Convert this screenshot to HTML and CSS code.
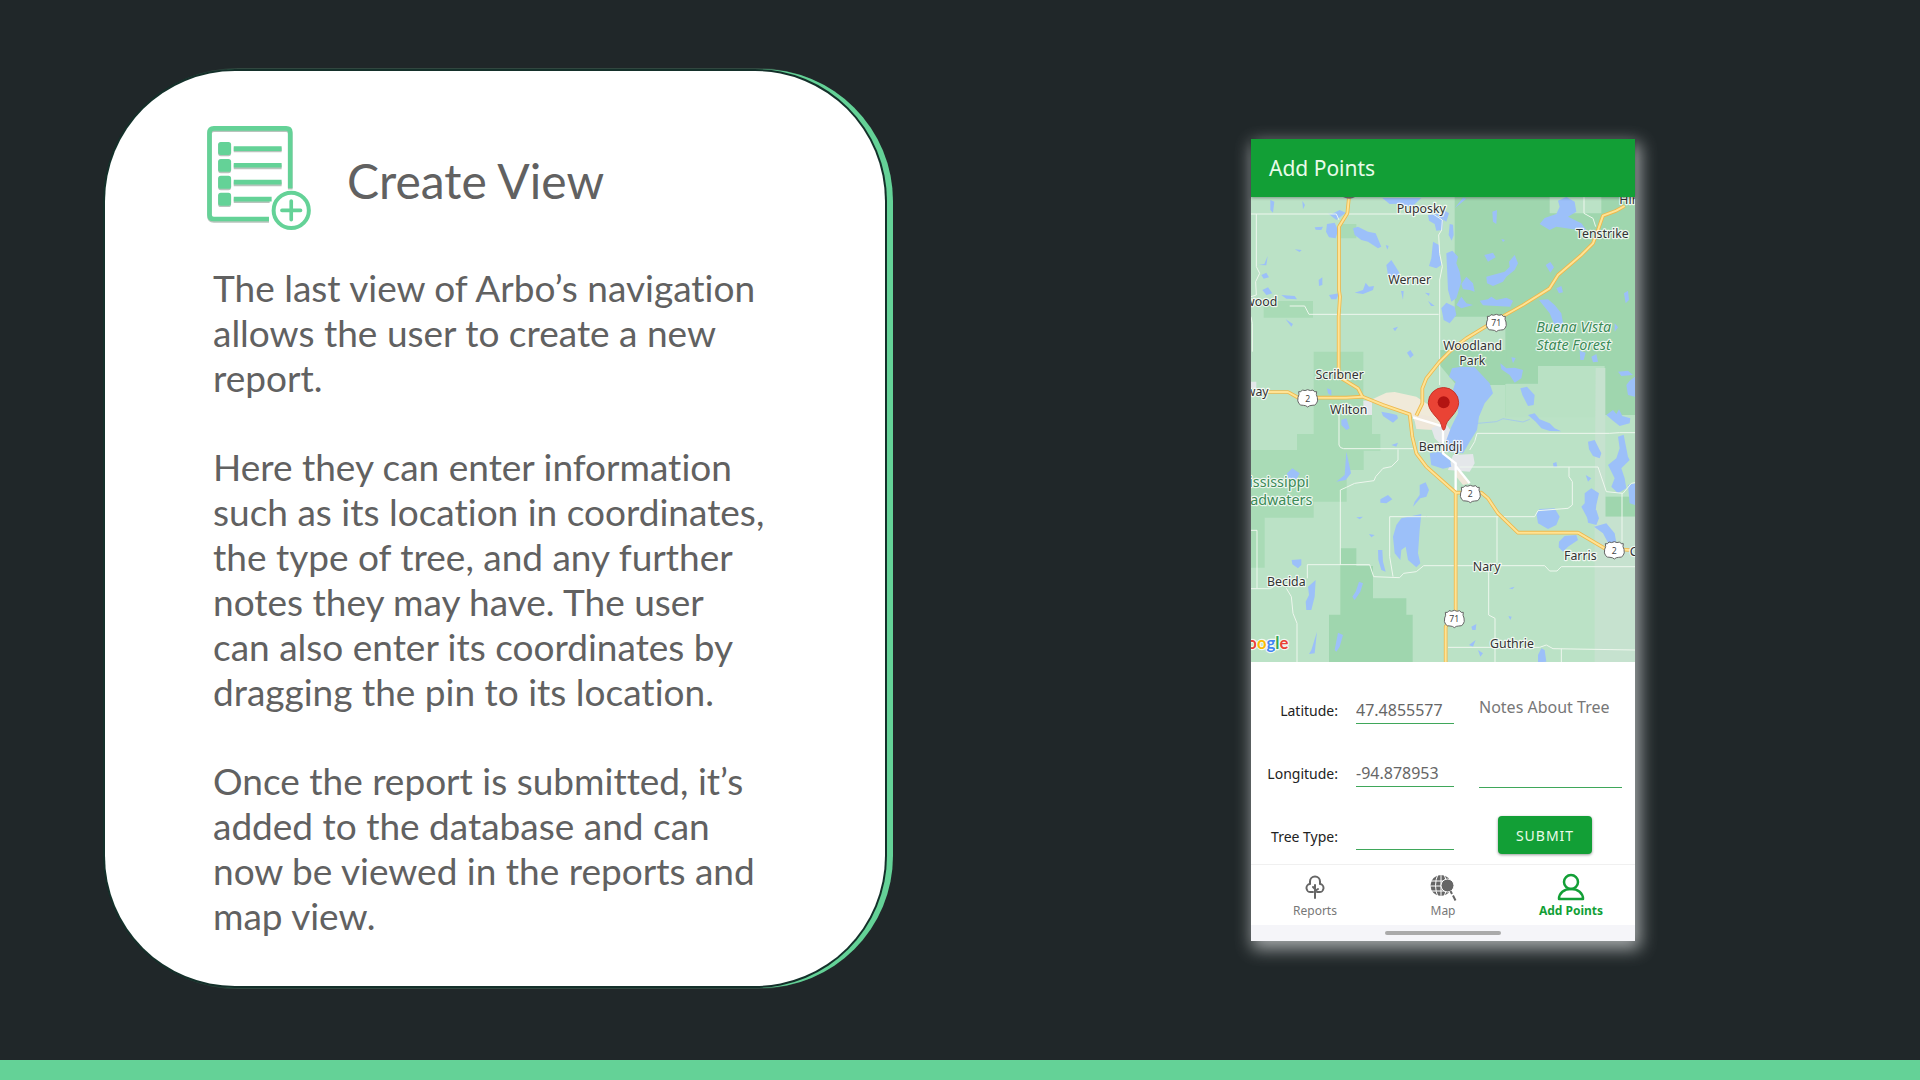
FILE: index.html
```html
<!DOCTYPE html>
<html lang="en">
<head>
<meta charset="utf-8">
<meta name="viewport" content="width=device-width, initial-scale=1">
<title>Arbo – Create View</title>
<link rel="stylesheet" href="styles.css">
</head>
<body>
<main class="slide">
  <article class="card">
    <header class="card-head">
      <svg class="card-icon" viewBox="52 44 318 316" aria-hidden="true">
        <g class="icon-shadow">
          <path d="M238 327H72q-13 0-13-13V67q0-13 13-13H290q12 0 12 12V234" fill="none" stroke="#b9c4bd" stroke-width="14" transform="translate(0 4)"/>
          <g fill="#b9c4bd" transform="translate(0 4)"><rect x="85" y="95" width="39" height="39" rx="8"/><rect x="85" y="146" width="39" height="39" rx="8"/><rect x="85" y="197" width="39" height="39" rx="8"/><rect x="85" y="248" width="39" height="39" rx="8"/></g>
        </g>
        <path d="M238 327H72q-13 0-13-13V67q0-13 13-13H290q12 0 12 12V234" fill="none" stroke="#64d297" stroke-width="14"/>
        <g fill="#64d297"><rect x="85" y="95" width="39" height="39" rx="8"/><rect x="85" y="146" width="39" height="39" rx="8"/><rect x="85" y="197" width="39" height="39" rx="8"/><rect x="85" y="248" width="39" height="39" rx="8"/></g>
        <path d="M132 119H276M132 170H276M132 221H276M132 272H240" stroke="#b9c4bd" stroke-width="14"/>
        <path d="M132 115H276M132 165H276M132 216H276M132 267H246" stroke="#64d297" stroke-width="14"/>
        <circle cx="305" cy="301" r="53" fill="#fff" stroke="#64d297" stroke-width="12"/>
        <path d="M305 273V329M277 301H333" stroke="#64d297" stroke-width="11" stroke-linecap="round"/>
      </svg>
      <h1 class="card-title">Create View</h1>
    </header>
    <div class="card-text">
      <p>The last view of Arbo’s navigation<br>allows the user to create a new<br>report.</p>
      <p>Here they can enter information<br>such as its location in coordinates,<br>the type of tree, and any further<br>notes they may have. The user<br>can also enter its coordinates by<br>dragging the pin to its location.</p>
      <p>Once the report is submitted, it’s<br>added to the database and can<br>now be viewed in the reports and<br>map view.</p>
    </div>
  </article>

  <section class="phone" aria-label="Add Points screen">
    <header class="app-bar"><h2>Add Points</h2></header>
    <svg class="map" viewBox="34 201 1152 1395" preserveAspectRatio="xMidYMid slice" role="img" aria-label="Map around Bemidji">
      <defs>
        <path id="shield" d="M-27-19q7 3 11-5q8 4 16-1q8 5 16 1q4 8 11 5q-3 9 2 17q3 12-3 19q-4 6-13 5q-8 0-13 5q-5-5-13-5q-9 1-13-5q-6-7-3-19q5-8 2-17z" fill="#fff" stroke="#666" stroke-width="3"/>
      </defs>
      <rect x="34" y="201" width="1152" height="1395" fill="#bbe2c6"/>
      <!-- forest and park areas -->
      <g fill="#9fd6ae">
        <path d="M645 201H930V250H1085V201H1186V760L1186 855H1010V860H797V760H897V710H795V560H645z"/>
        <path d="M797 560H900V760H797z"/>
        <path d="M600 660H800V765H650L600 705z" />
        <path d="M302 1255H350V1308H400V1405H500V1454H519V1598H268V1454H302z"/>
        <path d="M1097 1100H1186V1160H1097z"/>
      </g>
      <g fill="#a9dbb6">
        <path d="M222 665H371V815H397V912H422V962H372V1020H321V1115H222V1163H75V1313H34V960H172V912H222z"/>
        <path d="M72 513H220V563H72zM302 282H350V325H302z"/>
      </g>
      <path d="M895 708H1095V862H797V762H895zM600 562H797V660H600z" fill="#b9e1c4"/>
      <path d="M1068 714H1097V1160H1186V1598H1065V1130z" fill="#c6e2cf"/>
      <!-- built-up areas -->
      <path d="M388 812L440 788L465 786L530 800L575 830L605 885L600 900L540 897L515 855L430 830z" fill="#f0ead9"/>
      <path d="M520 850L580 860L600 900L530 897zM650 1015L690 1060L670 1065L650 1040z" fill="#efe7da"/>
      <path d="M575 895L615 875L632 900L625 930L600 940L585 925zM640 975L700 972L705 1000L690 1025L625 1020zM371 812H397V855H371zM34 755H50V775H34z" fill="#e4e7ea"/>
      <!-- lakes -->
      <g fill="#9cc0f9">
        <path d="M428 204H545L515 232L480 221L450 222zM92 210L104 215L100 248L92 240zM188 212L196 225L190 238zM265 250L275 253L300 240L318 248L290 270z"/>
        <path d="M262 282L285 278L295 300L288 325L268 322L259 305zM225 292L250 290L245 300L228 299zM340 295L355 290L385 305L408 310L425 350L415 355L385 335L365 330L345 315zM165 358L186 360L180 366zM438 345L447 348L443 359z"/>
        <path d="M565 255L600 250L612 262L608 300L590 302L585 282L568 272zM612 240L628 250L620 275L612 270zM630 282L640 284L642 315L636 332L627 315zM645 235L670 203L680 206z"/>
        <path d="M580 335L598 345L600 375L605 405L590 415L568 408L575 385zM620 370L638 362L655 380L650 400L660 425L665 455L650 505L635 515L625 480zM605 535L620 518L645 530L650 555L630 580L612 570z"/>
        <path d="M900 282L915 264L950 252L960 230L955 212L980 201L1005 215L1010 245L985 260L1025 280L1040 300L1000 298L950 290L930 300zM734 375L760 368L768 382L745 395zM740 440L770 432L795 425L810 410L808 395L825 375L835 400L825 420L800 440L790 455L760 468L742 460zM918 405L932 396L943 412L932 428z"/>
        <path d="M665 462L680 440L700 460L705 485L690 480L670 478zM650 525L665 500L680 520L700 525L665 535zM720 512L745 508L755 500L770 510L800 503L820 512L812 530L770 528L730 526zM898 510L925 508L945 525L965 550L972 590L950 600L930 550zM950 475L965 468L970 487L958 490zM1153 490L1165 482L1168 510L1158 520zM758 245L772 240L770 282L760 275zM785 327L796 330L790 336z"/>
        <path d="M440 405L455 390L468 410L480 430L470 445L445 435zM237 450L248 442L248 465L238 468zM345 488L370 480L378 458L388 470L403 468L400 480L370 492zM268 495L298 490L290 508L275 508zM68 480L85 472L98 490L80 495zM65 435L80 428L88 442L72 446zM56 405L74 402L84 378L80 406zM125 495L165 498L172 508L140 506zM502 668L512 660L522 675L512 684zM556 488L570 490L568 498zM565 512L585 528L574 528zM138 568L160 582L155 590zM484 483L492 483L490 510zM460 595L475 590L466 604z"/>
        <path d="M637 715L665 710L705 712L750 760L760 790L735 820L718 860L712 900L690 935L670 970L625 965L620 930L635 890L655 850L655 810L640 780L648 755L628 740zM570 970L600 965L630 985L635 1010L610 1016L575 1005z"/>
        <path d="M782 700L800 715L825 713L850 720L845 745L825 758L810 735L785 718zM842 775L862 770L885 795L882 825L865 828L848 795zM865 855L885 850L900 868L930 880L945 895L965 904L930 903L905 895L888 875zM1055 680L1070 672L1075 695L1060 697zM1135 725L1165 722L1180 735L1145 738zM1160 765L1170 752L1186 740V800L1165 795zM1100 855L1120 840L1130 852L1138 838L1148 858L1172 865L1170 880L1140 888L1120 872zM1020 662L1038 668L1032 690L1022 690zM815 682L828 684L820 700zM1125 580L1135 592L1125 605z"/>
        <path d="M1045 935L1065 930L1085 970L1080 985L1060 978L1048 958zM1135 920L1152 914L1158 945L1165 980L1170 990L1145 1015L1155 1045L1160 1075L1135 1090L1115 1070L1125 1045L1105 1005L1130 985L1140 955zM1165 1065L1186 1060V1125L1170 1120zM1038 1035L1055 1045L1045 1055zM1035 1090L1055 1075L1078 1090L1070 1125L1065 1170L1045 1168L1025 1130L1035 1120zM940 1000L950 996L953 1010L942 1012z"/>
        <path d="M320 965L330 1010L334 1030L318 1050L290 1055L315 1035zM305 870L320 865L330 895L320 900L305 885zM425 845L450 850L472 855L475 865L460 878L430 858zM262 775L275 780L275 797L265 790zM142 1030L158 1015L180 1030L170 1048L145 1045zM540 1065L558 1057L568 1080L560 1100L542 1105L520 1130L525 1115L540 1095zM422 1108L445 1095L458 1108L440 1120L422 1118zM455 945L475 938L470 950z"/>
        <path d="M485 1165L545 1152L540 1200L535 1270L542 1300L530 1312L505 1290L498 1250L485 1260L482 1290L465 1270L460 1220L470 1185zM890 1150L900 1137L945 1135L960 1160L950 1185L925 1197L895 1180zM958 1235L975 1218L1010 1215L1015 1230L985 1250L970 1265L957 1252zM1040 1140L1070 1140L1078 1165L1070 1185L1045 1178zM1063 1190L1100 1180L1125 1210L1130 1238L1105 1238L1090 1210z"/>
        <path d="M156 1290L185 1288L185 1305L175 1315L158 1303zM205 1370L228 1350L225 1400L215 1440L200 1440L198 1415L208 1395zM338 1400L348 1385L358 1355L370 1360L362 1385L345 1410zM285 1560L295 1508L310 1515L300 1550L290 1565zM415 1260L428 1260L430 1295L438 1325L425 1320L416 1290zM388 1212L405 1215L395 1222zM895 1575L905 1555L915 1560L920 1595L895 1597zM695 1490L710 1482L708 1500L698 1500zM688 1545L708 1530L700 1550zM215 1560L232 1505L225 1570L208 1572zM715 1560L730 1570L722 1580zM808 1375L825 1370L818 1378zM806 1458L816 1460L812 1470zM350 1162L370 1160L360 1168z"/>
      </g>
      <!-- minor roads -->
      <g fill="none" stroke="#eef7ee" stroke-width="3">
        <path d="M34 252H290L298 270M50 252V410L60 430L48 455L50 495L34 500M320 252H580L608 270L606 300L597 315L600 370L608 410L600 450V765M150 528H195L208 553H597M1033 201V250L1060 265L1068 290M34 560L38 580V665"/>
        <path d="M298 850V945Q300 955 312 956H520M475 958V990L455 1010L430 1015L408 1040L403 1052L345 1060L320 1072L302 1080V1305M660 1011H1075L1100 1085L1150 1090L1175 1060L1186 1058M690 960L705 935L712 910H1110L1140 908H1186M988 1011V1040L998 1055V1125L985 1135L895 1142L885 1160H560L450 1160V1280L460 1340M1147 1090V1235"/>
        <path d="M34 1376H92L118 1360M203 1345V1304H390L402 1340L480 1343L492 1330L530 1325L552 1307H915L930 1323H952L965 1310H1186M140 1375L155 1400L160 1450L172 1480V1598M34 1201H52V1376M772 1160V1298M747 1325V1455L766 1465V1598M625 1552H900L920 1545L940 1556L1186 1560M965 1556V1598"/>
      </g>
      <path d="M715 880L770 875L790 866L850 876L870 868" fill="none" stroke="#9cc0f9" stroke-width="2"/>
      <path d="M520 862L580 880L610 890V970L648 1000V1090M650 1010L690 1060" fill="none" stroke="#fff" stroke-width="7"/>
      <!-- highways -->
      <g fill="none" stroke-linejoin="round">
        <g stroke="#edb84d" stroke-width="11">
          <path d="M328 201L323 250L298 290V480L301 500L297 560V740L355 775L368 800"/>
          <path d="M80 786H145L175 803H320L368 800L430 825L510 853L518 920L530 970L560 1010L648 1088V1450L618 1490V1598"/>
          <path d="M1155 228L1130 242L1090 257L1075 300L1060 340L1025 375L955 435L930 475L850 525L770 570L680 625L635 660L600 695L560 745L548 775V820L530 857"/>
          <path d="M648 1088H725L745 1105L775 1150L835 1208H1015L1095 1255L1170 1260"/>
        </g>
        <g stroke="#ffe394" stroke-width="6">
          <path d="M328 201L323 250L298 290V480L301 500L297 560V740L355 775L368 800"/>
          <path d="M80 786H145L175 803H320L368 800L430 825L510 853L518 920L530 970L560 1010L648 1088V1450L618 1490V1598"/>
          <path d="M1155 228L1130 242L1090 257L1075 300L1060 340L1025 375L955 435L930 475L850 525L770 570L680 625L635 660L600 695L560 745L548 775V820L530 857"/>
          <path d="M648 1088H725L745 1105L775 1150L835 1208H1015L1095 1255L1170 1260"/>
        </g>
      </g>
      <use href="#shield" x="770" y="578"/><use href="#shield" x="204" y="804"/><use href="#shield" x="692" y="1091"/><use href="#shield" x="1124" y="1260"/><use href="#shield" x="644" y="1466"/>
      <path d="M310 201H346Q330 212 310 201z" fill="#777"/>
      <g class="route">
        <text x="770" y="588">71</text><text x="204" y="815">2</text><text x="692" y="1102">2</text><text x="1124" y="1271">2</text><text x="644" y="1476">71</text>
      </g>
      <g class="place">
        <text x="545" y="250">Puposky</text><text x="1088" y="323">Tenstrike</text><text x="510" y="462">Werner</text>
        <text x="699" y="659">Woodland</text><text x="698" y="705">Park</text><text x="300" y="746">Scribner</text>
        <text x="327" y="853">Wilton</text><text x="603" y="963">Bemidji</text><text x="1022" y="1290">Farris</text>
        <text x="741" y="1324">Nary</text><text x="140" y="1367">Becida</text><text x="817" y="1553">Guthrie</text>
        <text class="to-left" x="113" y="529">wood</text><text class="to-left" x="87" y="799">way</text>
        <text class="to-right" x="1139" y="221">Hin</text><text class="to-right" x="1170" y="1278">C</text>
      </g>
      <g class="park">
        <text class="italic" x="1002" y="607">Buena Vista</text><text class="italic" x="1002" y="660">State Forest</text>
        <text class="to-left" x="208" y="1072">ississippi</text><text class="to-left" x="218" y="1124">adwaters</text>
      </g>
      <text class="brand" x="146" y="1558"><tspan fill="#ea4335">o</tspan><tspan fill="#fbbc05">o</tspan><tspan fill="#4285f4">g</tspan><tspan fill="#34a853">l</tspan><tspan fill="#ea4335">e</tspan></text>
      <path d="M612 900C606 900 608 886 600 874C588 858 566 840 566 818A45.500 45.500 0 0 1 657 818C657 840 636 858 624 874C616 886 618 900 612 900z" fill="#ea4335" stroke="#c5352b" stroke-width="3"/>
      <circle cx="612" cy="817" r="18" fill="#b31412"/>
    </svg>

    <form class="form">
      <label for="lat">Latitude:</label>
      <input id="lat" type="text" value="47.4855577">
      <textarea class="notes" id="notes" aria-label="Notes About Tree" placeholder="Notes About Tree"></textarea>
      <label for="lon">Longitude:</label>
      <input id="lon" type="text" value="-94.878953">
      <label for="tree">Tree Type:</label>
      <input id="tree" type="text">
      <button class="submit" type="button">SUBMIT</button>
    </form>

    <nav class="tabs">
      <a href="#reports">
        <svg viewBox="0 0 28 28" fill="none" stroke="#666" stroke-width="2" stroke-linecap="round" stroke-linejoin="round" aria-hidden="true"><path d="M12 19H10a4 4 0 0 1-1-8V8.500a5 5 0 0 1 10 0V11a4 4 0 0 1-1 8H16M14 12V25M14 16l-2-2M14 18l3-2"/></svg>
        <span>Reports</span>
      </a>
      <a href="#map">
        <svg viewBox="0 0 28 28" fill="none" aria-hidden="true"><circle cx="12" cy="12.500" r="10.500" fill="#666"/><path d="M1 8H23M1 13H23M1 18H23M12 1V24M9 1Q4 12.500 9 24M15 1Q20 12.500 15 24" stroke="#fff" stroke-width="1"/><circle cx="18.500" cy="12.500" r="6.500" fill="#666" stroke="#fff"/><path d="M21.500 18l1.500 3M24 22.500l2.500 5" stroke="#666" stroke-width="2"/></svg>
        <span>Map</span>
      </a>
      <a class="active" href="#add">
        <svg viewBox="0 0 28 28" fill="none" stroke="#129f36" stroke-width="2.500" stroke-linejoin="round" aria-hidden="true"><circle cx="14" cy="9" r="7"/><path d="M2 26C2 20 7 16 14 16S26 20 26 26z"/></svg>
        <span>Add Points</span>
      </a>
    </nav>
    <div class="gesture"><span></span></div>
  </section>
</main>
<footer class="stripe"></footer>
</body>
</html>
```
FILE: styles.css
```css
* { box-sizing: border-box; }
body {
  margin: 0;
  min-height: 100vh;
  display: flex;
  flex-direction: column;
  background: #202729;
  font-family: "Noto Sans", sans-serif;
}
h1, h2, p { margin: 0; font-weight: 400; }

.slide {
  flex: 1;
  display: grid;
  grid-template-columns: 105fr 780fr 366fr 384fr 285fr;
  align-items: center;
  padding: 71px 0 74px;
}
.stripe { height: 20px; background: #64d297; }

.card {
  grid-column: 2;
  align-self: stretch;
  padding: 54px 60px 44px 102px;
  border-radius: 130px;
  background: #fff;
  box-shadow: 0 0 0 2px #14302a, 6px 0 0 2px #64d297, 3px 0 0 3px #31473f;
  color: #616161;
  font-family: Lato, sans-serif;
  font-variant-ligatures: none;
}
.card-head { display: flex; align-items: center; gap: 34px; height: 105px; }
.card-icon { width: 106px; height: 105px; }
.card-title { font-size: 48px; line-height: 60px; padding-top: 6px; }
.card-text {
  display: grid;
  gap: 44px;
  margin: 35px 0 0 6px;
  font-size: 37px;
  line-height: 45px;
  white-space: nowrap;
}

.phone {
  grid-column: 4;
  margin-top: 23px;
  background: #fff;
  box-shadow: 3px 6px 16px 2px #a4a8a9;
}
.app-bar {
  position: relative;
  height: 58px;
  padding: 0 18px;
  display: flex;
  align-items: center;
  background: #129f36;
  box-shadow: 0 1px 3px #00000055;
  color: #e9fbe9;
}
.app-bar h2 { font-size: 21px; line-height: 28px; font-weight: 400; }
.map { display: block; width: 100%; height: auto; }
.map text { text-anchor: middle; paint-order: stroke; stroke: #ffffffcc; stroke-width: 7px; stroke-linejoin: round; }
.map .to-left { text-anchor: end; }
.map .to-right { text-anchor: start; }
.place { font-size: 37px; fill: #333; }
.park { font-size: 43px; fill: #3c8a57; }
.italic { font-style: italic; }
.map .route text { font-size: 26px; fill: #444; stroke: none; }
.map .brand { font: 700 50px Lato, sans-serif; text-anchor: end; }

.form {
  display: grid;
  grid-template-columns: 87fr 98fr 150fr;
  grid-template-rows: repeat(3, 40px);
  gap: 23px 18px;
  padding: 28px 13px 8px 0;
}
.form label { align-self: center; text-align: right; font-size: 14px; color: #222; }
.form input, .form textarea {
  width: 100%;
  min-width: 0;
  border: 0;
  border-bottom: 1px solid #3fa75a;
  background: none;
  color: #666;
  font: 16px "Noto Sans", sans-serif;
  outline: 0;
}
.form input { height: 34px; padding: 6px 0 0; }
.form .notes {
  grid-column: 3;
  grid-row: 1 / 3;
  width: auto;
  height: 98px;
  margin-left: 7px;
  padding: 6px 0 0;
  resize: none;
}
.notes::placeholder { color: #777; opacity: 1; }
.submit {
  width: 94px;
  height: 38px;
  margin-left: 26px;
  padding: 0;
  border: 0;
  border-radius: 4px;
  background: #129f36;
  box-shadow: 0 1px 3px #00000066;
  color: #e9fbe9;
  font: 14px "Noto Sans", sans-serif;
  letter-spacing: 1px;
}

.tabs {
  display: grid;
  grid-template-columns: repeat(3, 1fr);
  height: 61px;
  border-top: 1px solid #f0f0f0;
}
.tabs a {
  display: flex;
  flex-direction: column;
  align-items: center;
  padding-top: 8px;
  color: #777;
  font-size: 12px;
  line-height: 20px;
  text-decoration: none;
}
.tabs svg { width: 28px; height: 28px; }
.tabs .active { color: #129f36; font-weight: 700; }
.gesture { height: 16px; display: flex; align-items: center; justify-content: center; background: #f5f5f9; }
.gesture span { width: 30%; height: 4px; border-radius: 2px; background: #aaa; }
```
